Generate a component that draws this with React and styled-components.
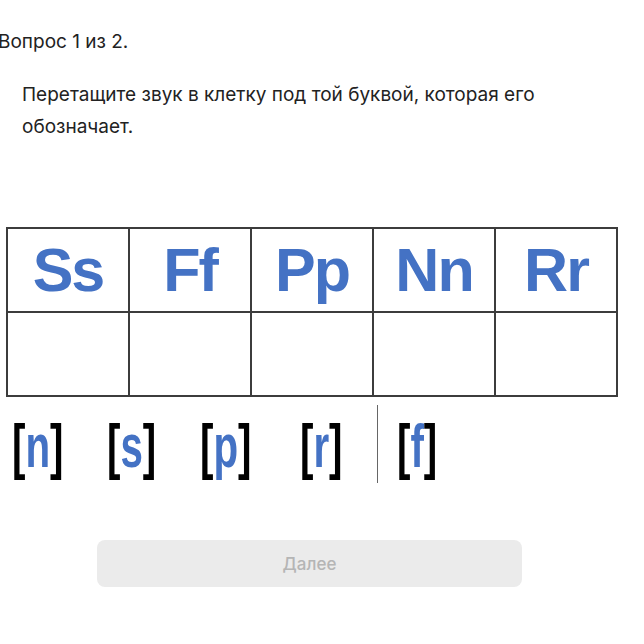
import React from "react";
import styled, { createGlobalStyle } from "styled-components";

const Global = createGlobalStyle`
  html, body { margin: 0; padding: 0; background: #fff; }
  body { font-family: Inter, "Noto Sans", sans-serif; color: #222; }
`;

const Page = styled.div`
  width: 644px;
  height: 644px;
  overflow: hidden;
  display: flex;
  flex-direction: column;
`;

const Heading = styled.div`
  margin: 30px 0 0 -2px;
  font-size: 19px;
  line-height: 24px;
  color: #222;
`;

const Prompt = styled.p`
  margin: 25px 0 0 22px;
  max-width: 580px;
  font-size: 19px;
  line-height: 32px;
  color: #222;
`;

const Table = styled.div`
  margin: 84px 0 0 6px;
  width: 612px;
  display: grid;
  grid-template-columns: repeat(5, 122px);
  grid-auto-rows: 84px;
  border-left: 2px solid #3c3c3c;
  border-top: 2px solid #3c3c3c;
  box-sizing: border-box;
`;

const Cell = styled.div`
  border-right: 2px solid #3c3c3c;
  border-bottom: 2px solid #3c3c3c;
  display: flex;
  align-items: center;
  justify-content: center;
  font-family: "Liberation Sans", Arial, sans-serif;
  font-weight: 700;
  font-size: 61px;
  line-height: 1;
  letter-spacing: -2px;
  color: #4472c4;
`;

const Sounds = styled.div`
  margin-top: 8px;
  height: 80px;
  display: flex;
  align-items: stretch;
`;

const Sound = styled.div`
  flex: none;
  width: ${(p) => p.$w}px;
  margin-left: ${(p) => p.$left}px;
  padding-top: 10px;
  overflow: visible;
`;

const Ink = styled.div`
  white-space: nowrap;
  transform: scaleX(0.65);
  transform-origin: 0 0;
  font-family: "Liberation Sans", Arial, sans-serif;
  font-weight: 700;
  font-size: 62px;
  line-height: 62px;
`;

const Bracket = styled.span`
  color: #000;
`;

const Letter = styled.span`
  color: #4472c4;
`;

const Divider = styled.div`
  flex: none;
  width: 1px;
  background: #666;
  margin: 0 0 2px ${(p) => p.$left}px;
`;

const NextButton = styled.button`
  margin: 55px 0 0 97px;
  width: 425px;
  height: 47px;
  border: none;
  border-radius: 8px;
  background: #ebebeb;
  color: #b5b5b5;
  font-family: Inter, "Noto Sans", sans-serif;
  font-size: 17px;
  font-weight: 500;
  cursor: default;
`;

const letters = ["Ss", "Ff", "Pp", "Nn", "Rr"];

function SoundCard({ letter, w, left }) {
  return (
    <Sound $w={w} $left={left}>
      <Ink>
        <Bracket>[</Bracket>
        <Letter>{letter}</Letter>
        <Bracket>]</Bracket>
      </Ink>
    </Sound>
  );
}

export default function App() {
  return (
    <Page>
      <Global />
      <Heading>Вопрос 1 из 2.</Heading>
      <Prompt>
        Перетащите звук в клетку под той буквой, которая его обозначает.
      </Prompt>
      <Table>
        {letters.map((l) => (
          <Cell key={l}>{l}</Cell>
        ))}
        {letters.map((l) => (
          <Cell key={l + "-drop"} />
        ))}
      </Table>
      <Sounds>
        <SoundCard letter="n" w={51} left={12} />
        <SoundCard letter="s" w={49} left={44} />
        <SoundCard letter="p" w={51} left={44} />
        <SoundCard letter="r" w={43} left={49} />
        <Divider $left={34} />
        <SoundCard letter="f" w={40} left={19} />
      </Sounds>
      <NextButton type="button">Далее</NextButton>
    </Page>
  );
}
